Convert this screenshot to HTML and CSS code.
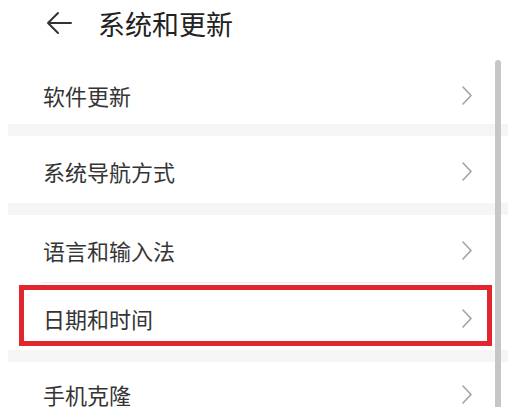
FILE: index.html
```html
<!DOCTYPE html>
<html lang="zh-CN">
<head>
<meta charset="utf-8">
<link rel="stylesheet" href="styles.css">
</head>
<body>
<div class="screen">
  <header class="header">
    <svg class="back" width="26" height="24" viewBox="0 0 26 24">
      <path d="M12 2 L2 12 L12 22 M2 12 H25" fill="none" stroke="#333" stroke-width="2" stroke-linecap="round" stroke-linejoin="round"/>
    </svg>
    <h1 class="title">系统和更新</h1>
  </header>
  <div class="list">
    <section class="group">
      <div class="row row-first"><span class="label">软件更新</span><svg class="chev" width="10" height="19" viewBox="0 0 10 19"><path d="M1 1 L9 9.5 L1 18" fill="none" stroke="#a3a3a3" stroke-width="1.6" stroke-linecap="round" stroke-linejoin="round"/></svg></div>
    </section>
    <section class="group">
      <div class="row"><span class="label">系统导航方式</span><svg class="chev" width="10" height="19" viewBox="0 0 10 19"><path d="M1 1 L9 9.5 L1 18" fill="none" stroke="#a3a3a3" stroke-width="1.6" stroke-linecap="round" stroke-linejoin="round"/></svg></div>
    </section>
    <section class="group">
      <div class="row"><span class="label">语言和输入法</span><svg class="chev" width="10" height="19" viewBox="0 0 10 19"><path d="M1 1 L9 9.5 L1 18" fill="none" stroke="#a3a3a3" stroke-width="1.6" stroke-linecap="round" stroke-linejoin="round"/></svg></div>
      <div class="divider"></div>
      <div class="row row-marked"><span class="label">日期和时间</span><svg class="chev" width="10" height="19" viewBox="0 0 10 19"><path d="M1 1 L9 9.5 L1 18" fill="none" stroke="#a3a3a3" stroke-width="1.6" stroke-linecap="round" stroke-linejoin="round"/></svg><div class="mark"></div></div>
    </section>
    <section class="group">
      <div class="row row-last"><span class="label">手机克隆</span><svg class="chev" width="10" height="19" viewBox="0 0 10 19"><path d="M1 1 L9 9.5 L1 18" fill="none" stroke="#a3a3a3" stroke-width="1.6" stroke-linecap="round" stroke-linejoin="round"/></svg></div>
    </section>
  </div>
  <div class="scrollbar"></div>
</div>
</body>
</html>
```
FILE: styles.css
```css
html, body {
  margin: 0;
  padding: 0;
  background: #ffffff;
}
.screen {
  position: relative;
  width: 515px;
  height: 407px;
  overflow: hidden;
  font-family: "Noto Sans CJK SC", "Noto Sans", sans-serif;
  background: #ffffff;
}
.header {
  height: 46px;
  display: flex;
  align-items: center;
  padding-left: 46px;
  gap: 26px;
}
.back {
  display: block;
}
.title {
  margin: 0;
  font-size: 27px;
  line-height: 27px;
  font-weight: 400;
  color: #222222;
}
.list {
  margin: 0 7px 0 8px;
  display: flex;
  flex-direction: column;
  gap: 12px;
  background: #f5f5f5;
}
.group {
  background: #ffffff;
  display: flex;
  flex-direction: column;
}
.row {
  position: relative;
  display: flex;
  align-items: center;
  justify-content: space-between;
  padding: 24px 36px 21px 35px;
}
.row-first {
  padding-top: 38px;
  padding-bottom: 18px;
}
.row-last {
  padding-top: 21px;
}
.label {
  font-size: 22px;
  line-height: 22px;
  color: #353535;
}
.chev {
  display: block;
}
.divider {
  height: 1px;
  margin: 0 35px 0 34px;
  background: #ececec;
}
.mark {
  position: absolute;
  left: 11px;
  right: 16px;
  top: 2px;
  bottom: 4px;
  border: 5px solid #e1262e;
}
.scrollbar {
  position: absolute;
  left: 495px;
  top: 60px;
  width: 6px;
  height: 360px;
  border-radius: 3px;
  background: #c6c6c6;
}
```
